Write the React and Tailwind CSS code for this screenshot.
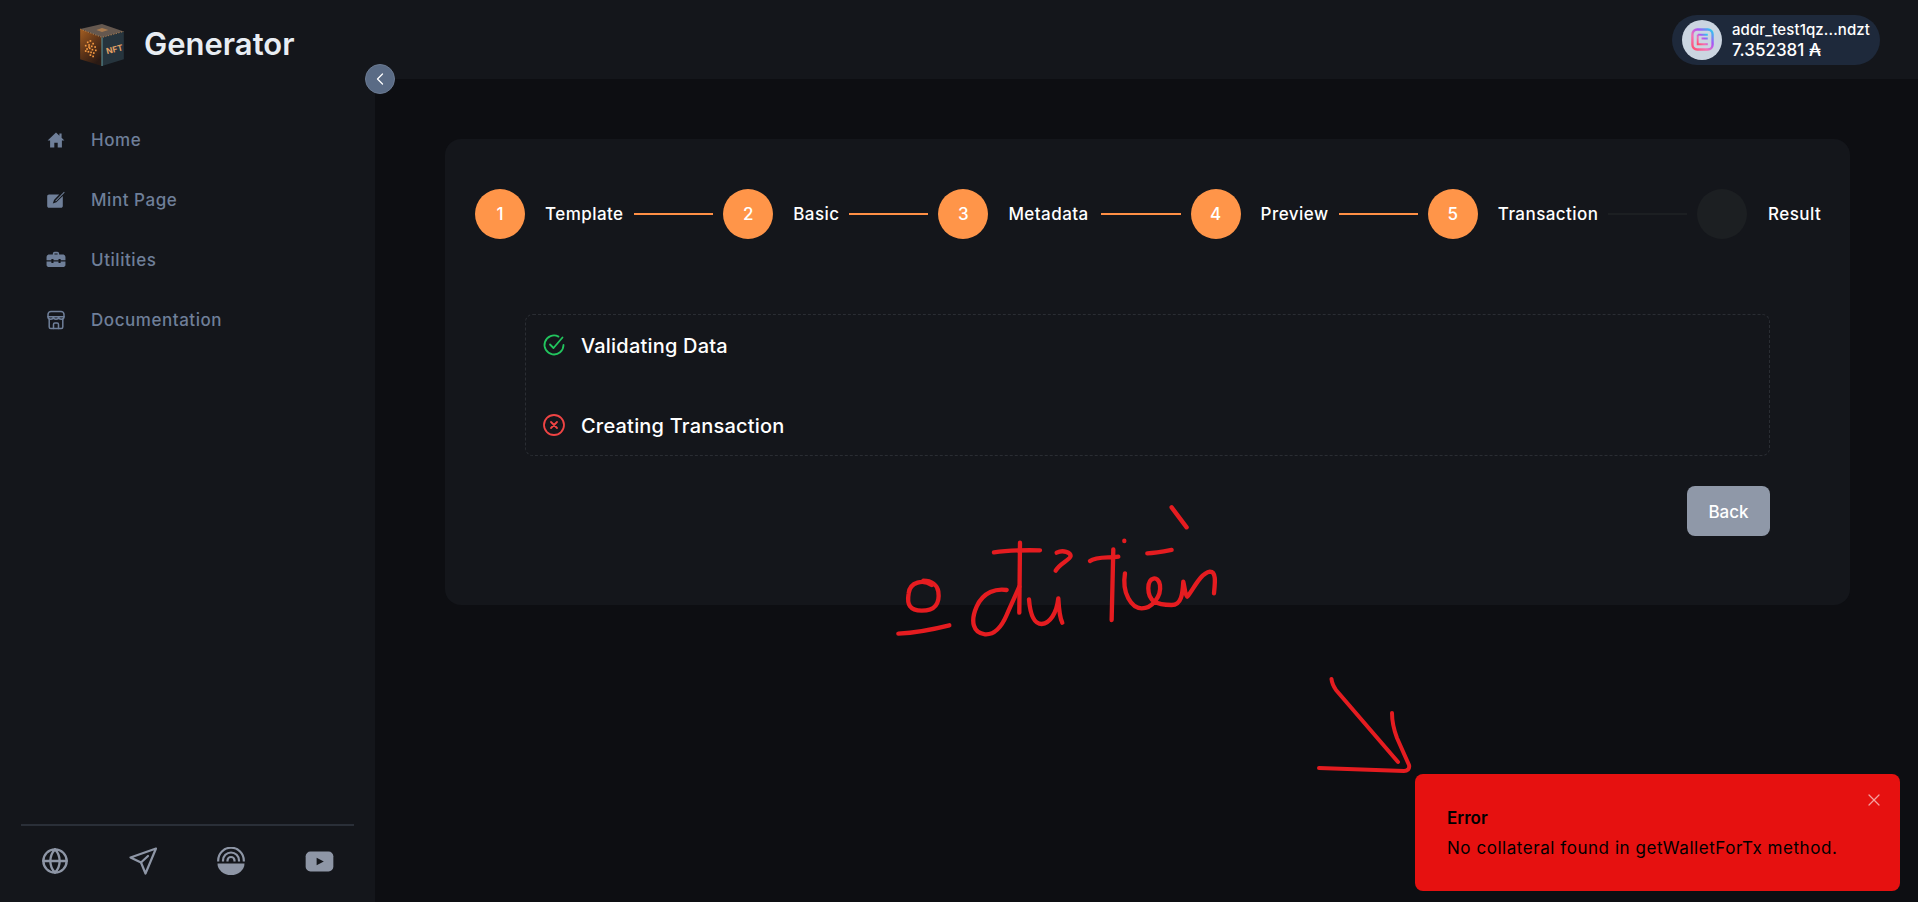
import React from 'react'
import { Globe, ChevronLeft, X } from 'lucide-react'

const STEPS = [
  { n: '1', label: 'Template', w: 'w-[79px]', done: true },
  { n: '2', label: 'Basic', w: 'w-[46px]', done: true },
  { n: '3', label: 'Metadata', w: 'w-[83px]', done: true },
  { n: '4', label: 'Preview', w: 'w-[68px]', done: true },
  { n: '5', label: 'Transaction', w: 'w-[100px]', done: false },
]

function HomeIcon() {
  return (
    <svg viewBox="0 0 20 20" className="w-5 h-5" fill="#6f7f99">
      <path d="M10 2.5 1.600 10.400h2.500v7.100h4.200v-4.700h3.400v4.700h4.200v-7.100h2.500l-2.800-2.600V3.600h-2.200v2.100z" />
    </svg>
  )
}

function MintIcon() {
  return (
    <svg viewBox="0 0 20 20" className="w-5 h-5" fill="#6f7f99">
      <path d="M3 4.500h10.200L8 10l-1.200 3.600L10.400 12.300 16.800 6v10c0 1.100-.8 1.800-1.800 1.800H3c-1 0-1.800-.7-1.800-1.800V6.300C1.200 5.300 2 4.500 3 4.500z" />
      <path d="m9.300 10.700 8.700-9 .7.700-8.800 9z" />
    </svg>
  )
}

function ToolboxIcon() {
  return (
    <svg viewBox="0 0 20 20" className="w-5 h-5 scale-[1.05]" fill="#6f7f99">
      <path d="M7 4.800V4c0-1 .8-1.800 1.800-1.800h2.400C12.200 2.200 13 3 13 4v.8h3.500c1.400 0 2.500 1.100 2.500 2.500v2.900h-4.600V9h-2v1.200H7.600V9h-2v1.200H1V7.300c0-1.400 1.100-2.500 2.500-2.500zm1.500 0h3V4c0-.2-.1-.3-.3-.3H8.800c-.2 0-.3.100-.3.300z" />
      <path d="M1 11.500h4.600v1.300h2v-1.300h4.800v1.300h2v-1.300H19v3.300c0 1-.8 1.800-1.800 1.800H2.800c-1 0-1.800-.8-1.800-1.800z" />
    </svg>
  )
}

function StoreIcon() {
  return (
    <svg viewBox="0 0 20 20" className="w-5 h-5" fill="none" stroke="#6f7f99" strokeWidth="1.500" strokeLinejoin="round" strokeLinecap="round">
      <path d="M5 1.500h10c1.600 0 3 1.400 3 3v2.200H2V4.500c0-1.600 1.400-3 3-3z" />
      <path d="M2 6.700c0 1.400 1 2.500 2.700 2.500 1.500 0 2.700-1.100 2.700-2.500 0 1.400 1.100 2.500 2.600 2.500s2.600-1.100 2.600-2.500c0 1.400 1.200 2.500 2.700 2.500 1.700 0 2.700-1.100 2.700-2.500" />
      <path d="M3.200 9.200V17c0 .8.600 1.500 1.500 1.500h10.600c.9 0 1.500-.7 1.500-1.500V9.200" />
      <path d="M7.500 18.500v-4c0-.8.600-1.400 1.400-1.400h2.200c.8 0 1.400.6 1.400 1.400v4" />
    </svg>
  )
}

function SendIcon() {
  return (
    <svg viewBox="0 0 28 28" className="w-7 h-7" fill="none" stroke="#8e96a6" strokeWidth="2.200" strokeLinejoin="round" strokeLinecap="round">
      <path d="M27 1.500 1.500 10.500 12 15.500 16.500 26.500z" />
      <path d="M12 15.500 19 9" />
    </svg>
  )
}

function RainbowIcon() {
  return (
    <svg viewBox="0 0 28 28" className="w-7 h-7" fill="none" stroke="#8e96a6" strokeWidth="2.200">
      <path d="M1.200 14.500v-1A12.800 12.800 0 0 1 26.800 13.500v1" />
      <path d="M6 14.500v-1a8 8 0 0 1 16 0v1" />
      <path d="M10.500 14.500v-1a3.500 3.500 0 0 1 7 0v1" />
      <path d="M0.500 16.500h27A13.500 11.500 0 0 1 .5 16.500z" fill="#8e96a6" stroke="none" />
    </svg>
  )
}

function YoutubeIcon() {
  return (
    <svg viewBox="0 0 30 22" className="w-[29px] h-[21px]">
      <rect x="0.500" y="0.500" width="29" height="21" rx="5" fill="#8e96a6" />
      <path d="M12 7.200 19.500 11 12 14.800z" fill="#14161b" />
    </svg>
  )
}

function CubeLogo() {
  const dots = [
    [20, 52], [28, 48], [36, 56], [14, 62], [24, 60], [32, 64], [42, 66], [18, 72], [26, 70],
    [34, 74], [44, 76], [22, 80], [30, 82], [38, 84], [28, 90], [14, 78], [36, 94], [24, 66],
  ]
  return (
    <svg viewBox="0 0 130 125" className="w-11 h-[42px]">
      <defs>
        <linearGradient id="cubeLeft" x1="0" y1="0" x2="0.6" y2="1">
          <stop offset="0" stopColor="#a55f22" />
          <stop offset="0.55" stopColor="#5e3418" />
          <stop offset="1" stopColor="#2a1a14" />
        </linearGradient>
      </defs>
      <polygon points="0,15 65,0 130,22 65,40" fill="#65584f" />
      <polygon points="0,15 65,40 65,125 0,105" fill="url(#cubeLeft)" />
      <polygon points="65,40 130,22 130,105 65,125" fill="#26343d" />
      <path d="M0 15 65 40 130 22" fill="none" stroke="#d79a5c" strokeWidth="2" strokeDasharray="4 4" />
      <path d="M65 40v85" stroke="#5f9aa0" strokeWidth="3" />
      <path d="M48 18 65 12 84 18 65 24z" fill="#c98a4e" opacity="0.7" />
      {dots.map(([x, y]) => (
        <rect key={`${x}-${y}`} x={x} y={y} width="5" height="5" fill="#f59a42" />
      ))}
      <text x="80" y="90" fontSize="25" fontWeight="700" fill="#e3a064" transform="rotate(-14 80 90)">NFT</text>
    </svg>
  )
}

function WalletLogo() {
  return (
    <svg viewBox="0 0 24 24" className="w-[23px] h-[23px]" fill="none">
      <defs>
        <linearGradient id="walletGrad" x1="0" y1="1" x2="1" y2="0">
          <stop offset="0" stopColor="#ff4d6d" />
          <stop offset="0.35" stopColor="#f472b6" />
          <stop offset="0.65" stopColor="#a855f7" />
          <stop offset="1" stopColor="#22d3ee" />
        </linearGradient>
      </defs>
      <rect x="1.500" y="1.500" width="21" height="21" rx="5" stroke="url(#walletGrad)" strokeWidth="2.500" />
      <path d="M7 7h10.500M11 11h6.500M7 7v10h10.500" stroke="url(#walletGrad)" strokeWidth="2" />
    </svg>
  )
}

function Annotations() {
  return (
    <svg viewBox="0 0 1918 902" className="absolute inset-0 w-full h-full pointer-events-none" fill="none" stroke="#e51c20" strokeLinecap="round" strokeLinejoin="round">
      <g transform="translate(860 490) scale(0.3333)" strokeWidth="13">
        <path d="M215 285C190 268 150 275 146 310 140 345 150 362 185 362 225 362 240 340 235 305 232 285 215 272 190 272" />
        <path d="M115 431C170 428 220 418 268 406" />
        <path d="M402 187C450 180 490 180 540 181" />
        <path d="M480 158 478 368" />
        <path d="M440 300C410 295 370 305 350 350 330 395 340 430 375 433 405 435 425 410 440 375 455 340 465 320 478 290" />
        <path d="M507 328C510 365 520 402 545 402 570 400 590 370 595 325 597 360 600 385 607 398" />
        <path d="M590 188C610 178 632 188 632 198 630 210 600 220 587 242" />
        <path d="M760 178 755 390" />
        <path d="M690 213C710 198 750 205 775 200" />
        <path d="M793 152v1" />
        <path d="M795 250C785 310 815 355 845 355 875 355 905 320 900 285 895 255 865 260 865 295 865 335 890 345 935 345 965 345 968 310 970 275 975 295 975 315 982 320 1000 300 1020 250 1050 245 1070 245 1065 280 1062 310" />
        <path d="M862 190C885 190 910 185 935 180" />
        <path d="M935 52 980 112" />
      </g>
      <g strokeWidth="4">
        <path d="M1331.500 679C1332 684 1334 687 1336 690L1398 762" />
        <path d="M1392 713C1392 722 1394 730 1397 738L1409 765C1410 769 1407 771 1404 771L1319 768" />
      </g>
    </svg>
  )
}

function NavItem({ icon, label }) {
  return (
    <div className="flex items-center h-[60px] gap-[25px] pl-[46px] text-[17px] font-medium text-[#6f7f99] tracking-[0.55px]">
      {icon}
      <span className="pt-0.5">{label}</span>
    </div>
  )
}

function Step({ step }) {
  return (
    <div className="flex items-center flex-auto">
      <div className="w-[50px] h-[50px] shrink-0 rounded-full bg-[#ff9549] flex items-center justify-center pt-0.5 text-white text-[17px] font-medium">
        {step.n}
      </div>
      <span className={`${step.w} ml-5 pt-0.5 shrink-0 text-white text-[17px] font-medium whitespace-nowrap tracking-[0.45px]`}>{step.label}</span>
      <div className={`flex-1 h-0.5 mx-2.5 ${step.done ? 'bg-[#ff8f45]' : 'bg-[#1c1f22]'}`} />
    </div>
  )
}

export default function App() {
  return (
    <div className="relative flex h-screen w-full overflow-hidden bg-[#0d0e12] font-[Inter,sans-serif]">
      {/* Sidebar */}
      <aside className="w-[375px] shrink-0 flex flex-col bg-[#14161b]">
        <div className="h-[79px] pt-2.5 pl-20 flex items-center gap-5">
          <CubeLogo />
          <span className="text-[31px] font-semibold text-[#e8edf3]">Generator</span>
        </div>
        <nav className="pt-[31px] flex flex-col">
          <NavItem icon={<HomeIcon />} label="Home" />
          <NavItem icon={<MintIcon />} label="Mint Page" />
          <NavItem icon={<ToolboxIcon />} label="Utilities" />
          <NavItem icon={<StoreIcon />} label="Documentation" />
        </nav>
        <div className="mt-auto mx-[21px] border-t-2 border-[#2a2f38] px-5 pt-[21px] pb-[27px] flex items-center justify-between">
          <Globe className="w-7 h-7" color="#8e96a6" strokeWidth={2} />
          <SendIcon />
          <RainbowIcon />
          <YoutubeIcon />
        </div>
      </aside>

      {/* Main */}
      <div className="flex-1 flex flex-col min-w-0">
        <header className="h-[79px] shrink-0 bg-[#14161b] flex items-center justify-end pr-[38px]">
          <div className="w-[208px] h-[50px] rounded-full bg-[#1e293b] flex items-center pl-2.5 gap-2.5">
            <div className="w-10 h-10 rounded-full bg-[#cbd5e1] flex items-center justify-center">
              <WalletLogo />
            </div>
            <div className="text-white font-medium leading-[20px]">
              <p className="text-[15px] tracking-[0.1px]">addr_test1qz...ndzt</p>
              <p className="text-[17px]">7.352381 ₳</p>
            </div>
          </div>
        </header>

        <main className="flex-1 pl-[70px] pr-[68px] pt-[60px]">
          <div className="rounded-2xl bg-[#14161b] px-[30px] pt-[50px] pb-[69px]">
            <div className="flex items-center">
              {STEPS.map((s) => (
                <Step key={s.n} step={s} />
              ))}
              <div className="flex items-center shrink-0">
                <div className="w-[50px] h-[50px] rounded-full bg-[#1c1f22]" />
                <span className="w-[52px] ml-[21px] pt-0.5 text-white text-[17px] font-medium tracking-[0.45px] whitespace-nowrap">Result</span>
              </div>
            </div>

            <div className="mx-[50px] mt-[75px] rounded-lg border border-dashed border-[#2a2d33] pl-[16px] flex flex-col gap-5">
              <div className="h-[60px] flex items-center gap-[15px] text-white text-[20px] font-medium tracking-[0.2px]">
                <svg viewBox="0 0 24 24" className="w-6 h-6" fill="none" stroke="#22c55e" strokeWidth="1.800" strokeLinecap="round" strokeLinejoin="round">
                  <path d="M21.500 12a9.500 9.500 0 1 1-5-8.400" />
                  <path d="M8 11.500l3.500 3.500L20.500 4.500" />
                </svg>
                <span className="pt-0.5">Validating Data</span>
              </div>
              <div className="h-[60px] flex items-center gap-[15px] text-white text-[20px] font-medium tracking-[0.2px]">
                <svg viewBox="0 0 24 24" className="w-6 h-6" fill="none" stroke="#ef4444" strokeWidth="1.800" strokeLinecap="round">
                  <circle cx="12" cy="12" r="10" />
                  <path d="M9 9l6 6M15 9l-6 6" />
                </svg>
                <span className="pt-0.5">Creating Transaction</span>
              </div>
            </div>

            <div className="mx-[50px] mt-[30px] flex justify-end">
              <button className="w-[83px] h-[50px] rounded-lg bg-[#8f98a8] pt-[3px] text-white text-[17px] font-medium">Back</button>
            </div>
          </div>
        </main>
      </div>

      {/* Collapse toggle */}
      <button className="absolute left-[365px] top-16 w-[30px] h-[30px] rounded-full bg-[#5a6b85] border border-[#6b7a92] flex items-center justify-center">
        <ChevronLeft className="w-5 h-5 text-white" strokeWidth={1.500} />
      </button>

      <Annotations />

      {/* Toast */}
      <div className="absolute left-[1415px] top-[774px] w-[485px] h-[117px] rounded-lg bg-[#e61110] pl-8 pt-[34px] text-black">
        <p className="text-[17px] font-semibold leading-5">Error</p>
        <p className="mt-2.5 text-[17px] leading-5 tracking-[0.55px] whitespace-nowrap">No collateral found in getWalletForTx method.</p>
        <X className="absolute right-4 top-4 w-5 h-5 text-white opacity-60" strokeWidth={1.500} />
      </div>
    </div>
  )
}
